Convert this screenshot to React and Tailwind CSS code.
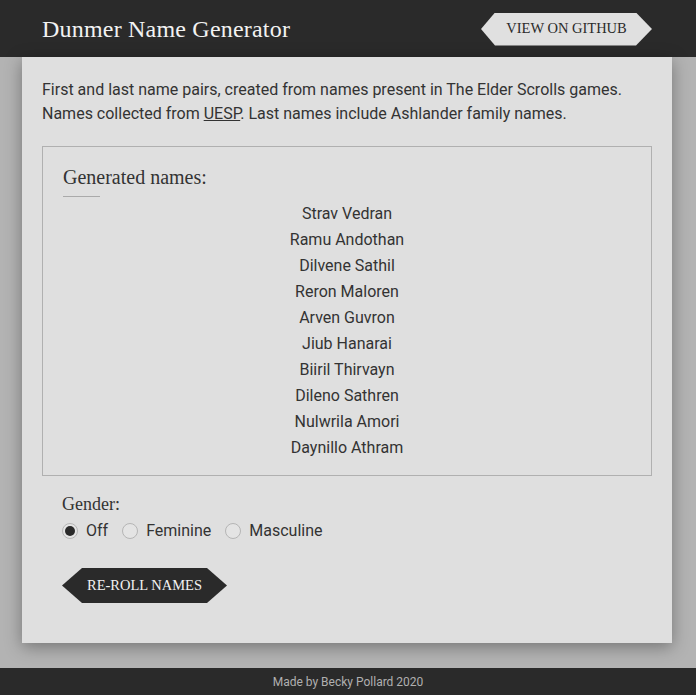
import React from "react";

const serif = { fontFamily: "'Liberation Serif', 'DejaVu Serif', serif" };

function Radio({ checked, label }) {
  return (
    <label className="flex items-center gap-[8px] mr-[14px]">
      <span className="w-[16px] h-[16px] rounded-full border border-[#b5b5b5] bg-[#e4e4e4] flex items-center justify-center">
        {checked && <span className="w-[10px] h-[10px] rounded-full bg-[#2a2a2a]" />}
      </span>
      <span>{label}</span>
    </label>
  );
}

export default function App() {
  const names = [
    "Strav Vedran",
    "Ramu Andothan",
    "Dilvene Sathil",
    "Reron Maloren",
    "Arven Guvron",
    "Jiub Hanarai",
    "Biiril Thirvayn",
    "Dileno Sathren",
    "Nulwrila Amori",
    "Daynillo Athram",
  ];
  return (
    <div className="min-h-[695px] bg-[#b3b3b3] flex flex-col text-[#333]" style={{ fontFamily: "Roboto, 'Liberation Sans', sans-serif" }}>
      <header className="h-[57px] bg-[#2a2a2a] flex items-center justify-between pl-[42px] pr-[44px]">
        <h1 className="text-[#f2f2f2] text-[24px] tracking-[0.2px]" style={serif}>
          Dunmer Name Generator
        </h1>
        <a
          className="h-[33px] w-[171px] bg-[#e0e0e0] text-[#2a2a2a] text-[14.5px] flex items-center justify-center mt-[1px]"
          style={{ ...serif, clipPath: "polygon(14px 0, calc(100% - 16px) 0, 100% 50%, calc(100% - 16px) 100%, 14px 100%, 0 50%)" }}
        >
          VIEW ON GITHUB
        </a>
      </header>
      <main className="mx-[22px] w-[650px] bg-[#dfdfdf] shadow-[0_4px_16px_rgba(0,0,0,0.35)] px-[20px] pt-[21px] pb-[40px] relative z-10">
        <p className="text-[16px] leading-[24px]">
          First and last name pairs, created from names present in The Elder Scrolls games. Names collected from{" "}
          <span className="underline">UESP</span>. Last names include Ashlander family names.
        </p>
        <div className="mt-[20px] border border-[#b0b0b0] pt-[16px] pb-[14px] px-[20px]">
          <h2 className="text-[20px] leading-[28px]" style={serif}>Generated names:</h2>
          <div className="w-[37px] h-px bg-[#aaa] mt-[5px]" />
          <ul className="flex flex-col items-center mt-[4px]">
            {names.map((n) => (
              <li key={n} className="text-[16px] leading-[26px]">{n}</li>
            ))}
          </ul>
        </div>
        <div className="px-[20px] mt-[17px]">
          <div className="text-[18px] leading-[22px]" style={serif}>Gender:</div>
          <div className="flex items-center mt-[4px] text-[16px] leading-[24px]">
            <Radio checked label="Off" />
            <Radio label="Feminine" />
            <Radio label="Masculine" />
          </div>
          <button
            className="mt-[25px] h-[35px] w-[165px] bg-[#2a2a2a] text-[#f2f2f2] text-[14.5px] flex items-center justify-center"
            style={{ ...serif, clipPath: "polygon(20px 0, calc(100% - 20px) 0, 100% 50%, calc(100% - 20px) 100%, 20px 100%, 0 50%)" }}
          >
            RE-ROLL NAMES
          </button>
        </div>
      </main>
      <div className="flex-1 min-h-[25px]" />
      <footer className="h-[27px] bg-[#2a2a2a] flex items-center justify-center text-[12px] text-[#b0b0b0]">
        Made by Becky Pollard 2020
      </footer>
    </div>
  );
}
